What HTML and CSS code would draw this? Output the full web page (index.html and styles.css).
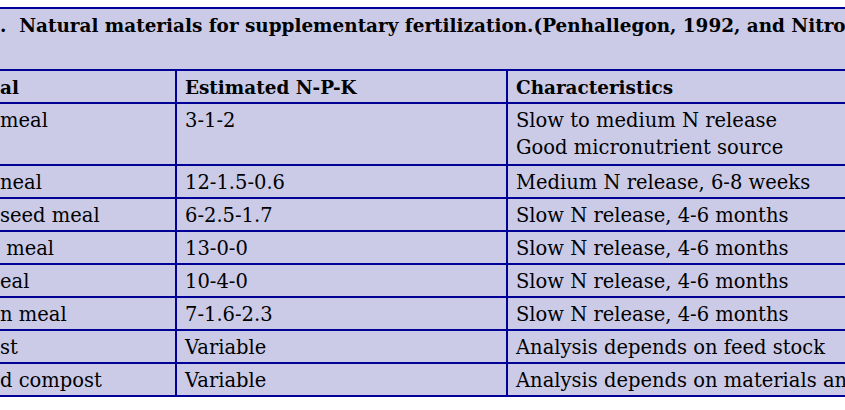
FILE: index.html
```html
<!DOCTYPE html>
<html lang="en">
<head>
<meta charset="utf-8">
<title>Natural materials for supplementary fertilization</title>
<link rel="stylesheet" href="styles.css">
</head>
<body>
<div class="frame">
  <table class="fert">
    <colgroup>
      <col class="c1"><col class="c2"><col class="c3">
    </colgroup>
    <thead>
      <tr>
        <th class="title" colspan="3">.&nbsp;&nbsp;Natural materials for supplementary fertilization.(Penhallegon, 1992, and Nitrogen</th>
      </tr>
      <tr class="head">
        <th>al</th>
        <th>Estimated N-P-K</th>
        <th>Characteristics</th>
      </tr>
    </thead>
    <tbody>
      <tr class="tall">
        <td class="ind">meal</td>
        <td>3-1-2</td>
        <td>Slow to medium N release<br>Good micronutrient source</td>
      </tr>
      <tr>
        <td>neal</td>
        <td>12-1.5-0.6</td>
        <td>Medium N release, 6-8 weeks</td>
      </tr>
      <tr>
        <td>seed meal</td>
        <td>6-2.5-1.7</td>
        <td>Slow N release, 4-6 months</td>
      </tr>
      <tr>
        <td>&nbsp;meal</td>
        <td>13-0-0</td>
        <td>Slow N release, 4-6 months</td>
      </tr>
      <tr>
        <td>eal</td>
        <td>10-4-0</td>
        <td>Slow N release, 4-6 months</td>
      </tr>
      <tr>
        <td>n meal</td>
        <td>7-1.6-2.3</td>
        <td>Slow N release, 4-6 months</td>
      </tr>
      <tr>
        <td>st</td>
        <td>Variable</td>
        <td>Analysis depends on feed stock</td>
      </tr>
      <tr>
        <td>d compost</td>
        <td>Variable</td>
        <td>Analysis depends on materials and</td>
      </tr>
    </tbody>
  </table>
</div>
</body>
</html>
```

FILE: styles.css
```css
html, body {
  margin: 0;
  padding: 0;
  background: #ffffff;
}

.frame {
  width: 845px;
  height: 410px;
  overflow: hidden;
  padding-top: 7px;
  box-sizing: border-box;
}

.fert {
  border-collapse: collapse;
  table-layout: fixed;
  width: 1007px;
  background: #cbcbe8;
  font-family: "DejaVu Serif", "Liberation Serif", serif;
  font-size: 19.5px;
  line-height: 27px;
  color: #000000;
}

.c1 { width: 176px; }
.c2 { width: 331px; }
.c3 { width: 500px; }

.fert th,
.fert td {
  border: 2px solid #000096;
  padding: 3px 8px 1px 8px;
  text-align: left;
  vertical-align: top;
  white-space: nowrap;
  overflow: hidden;
}

.fert th:first-child,
.fert td:first-child {
  border-left: none;
  padding-left: 0;
}

.fert th {
  font-weight: bold;
  font-size: 18.4px;
}

.fert .title {
  padding: 3px 0 30px 1px;
  border-right: none;
}

.fert .tall td {
  padding-bottom: 3px;
}

.fert .ind {
  padding-left: 2px;
}

.fert td:last-child,
.fert th:last-child {
  border-right: none;
}
```
